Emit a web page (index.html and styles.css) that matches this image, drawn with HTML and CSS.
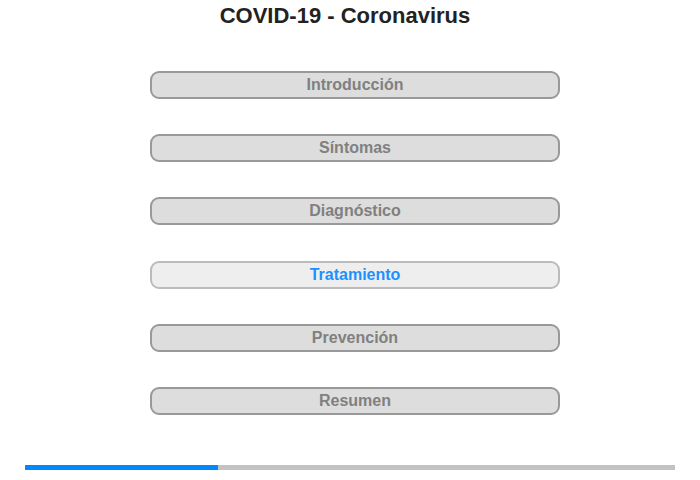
FILE: index.html
```html
<!DOCTYPE html>
<html lang="es">
<head>
  <meta charset="UTF-8">
  <meta name="viewport" content="width=device-width, initial-scale=1.0">
  <title>COVID-19 - Coronavirus</title>
  <link rel="stylesheet" href="styles.css">
</head>
<body>
  <h1 class="titulo">COVID-19 - Coronavirus</h1>

  <div class="menu">
    <button class="opcion">Introducción</button>
    <button class="opcion">Síntomas</button>
    <button class="opcion">Diagnóstico</button>
    <button class="opcion activa">Tratamiento</button>
    <button class="opcion">Prevención</button>
    <button class="opcion">Resumen</button>
  </div>

  <div class="progreso">
    <div class="barra" style="width: 193px"></div>
  </div>
</body>
</html>
```

FILE: styles.css
```css
body {
  margin: 0;
  padding: 0;
  background: white;
  font-family: 'Liberation Sans', Arial, sans-serif;
}

.titulo {
  margin: 3px 0 0 0;
  padding-right: 10px;
  font-size: 22px;
  line-height: 25px;
  font-weight: bold;
  color: #222222;
  text-align: center;
}

.menu {
  display: flex;
  flex-direction: column;
  gap: 35.2px;
  width: 410px;
  margin: 43px 0 0 150px;
}

.opcion {
  box-sizing: border-box;
  height: 28px;
  padding: 0;
  background: #dddddd;
  border: 2px solid #999999;
  border-radius: 9px;
  color: #808080;
  font-family: 'Liberation Sans', Arial, sans-serif;
  font-size: 16px;
  font-weight: bold;
  line-height: 24px;
  text-align: center;
  cursor: pointer;
}

.opcion.activa {
  background: #eeeeee;
  border-color: #bbbbbb;
  color: #1e90ff;
}

.progreso {
  display: flex;
  height: 5px;
  margin: 50px 25px 0 25px;
  background: #c2c2c2;
}

.barra {
  background: #0088ff;
}
```
